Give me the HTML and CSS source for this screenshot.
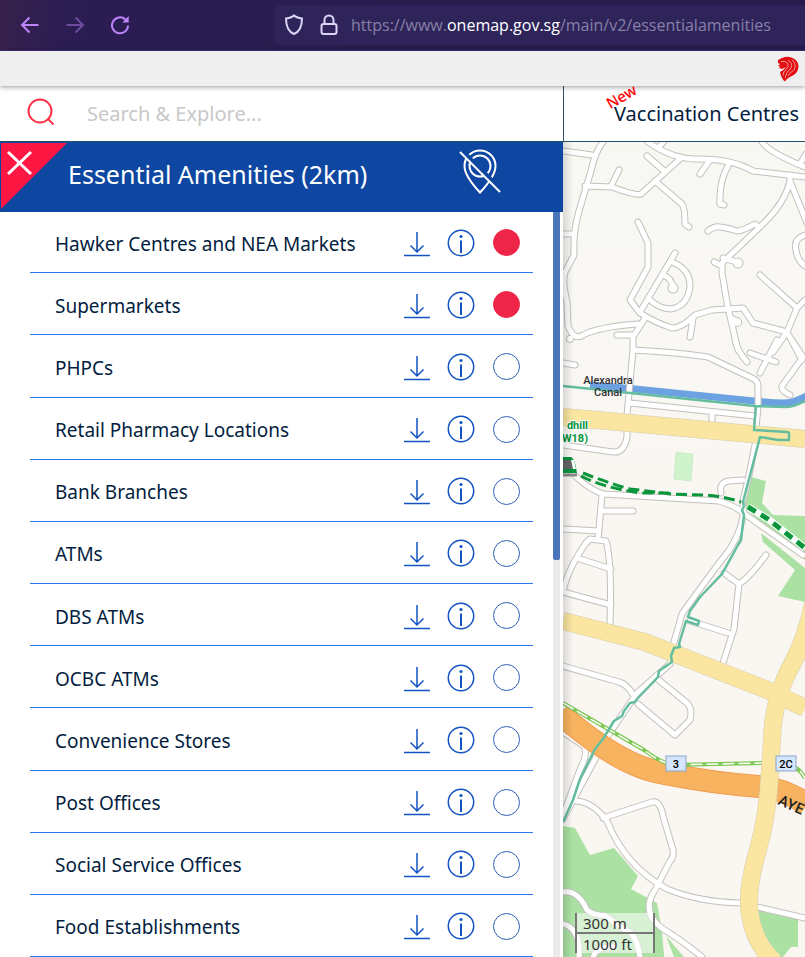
FILE: index.html
```html
<!DOCTYPE html>
<html lang="en">
<head>
<meta charset="utf-8">
<title>Essential Amenities</title>
<link rel="stylesheet" href="styles.css">
</head>
<body>
<svg class="defs" aria-hidden="true">
  <symbol id="download" viewBox="0 0 28 28"><path d="M14 3v20M7.500 16.500l6.500 6.500 6.500-6.500M1 26.500h26" fill="none" stroke="currentColor" stroke-width="1.500"/></symbol>
  <symbol id="info" viewBox="0 0 28 28"><circle cx="14" cy="14" r="12.700" fill="none" stroke="currentColor" stroke-width="1.500"/><path d="M14 11.500v12.500" stroke="currentColor" stroke-width="2"/><circle cx="14" cy="7.500" r="1.600" fill="currentColor"/></symbol>
</svg>

<div class="browser">
  <nav class="history" aria-label="History">
    <button type="button" aria-label="Back"><svg viewBox="0 0 20 20"><path d="M18.500 10H2M9.500 2.500L2 10l7.500 7.500"/></svg></button>
    <button type="button" aria-label="Forward" disabled><svg viewBox="0 0 20 20"><path d="M1.500 10H18M10.500 2.500L18 10l-7.500 7.500"/></svg></button>
    <button type="button" aria-label="Reload"><svg viewBox="0 0 20 20"><path d="M18 10.500a8 8 0 1 1-2.500-6"/><path d="M18.700 1v6.500h-6.500z" class="solid"/></svg></button>
  </nav>
  <div class="address">
    <svg class="shield" viewBox="0 0 20 22"><path d="M10 1.500C8 3.500 5 4 2 4.500c0 8 2 13 8 15.500 6-2.500 8-7.500 8-15.500-3-.5-6-1-8-3z"/></svg>
    <svg class="lock" viewBox="0 0 20 22"><rect x="2.500" y="10" width="15" height="10" rx="2"/><path d="M5.500 10V6a4.500 4.500 0 0 1 9 0v4"/></svg>
    <span class="url">https://www.<b>onemap.gov.sg</b>/main/v2/essentialamenities</span>
  </div>
</div>

<div class="masthead">
  <svg class="lion" viewBox="0 0 22 26" role="img" aria-label="Singapore Government"><path d="M1 4L5 2Q10 0 14 1.500q7 2 7.500 8.500 0 7-6.500 10-5 2-7 5.500-2-1-4-5.500l-1-4q3-1 6-5l-4 2-3-1 1-2H1l2-2-2-1z" fill="#e30d12"/><path d="M4 5.500h4l3 2q1 3-2 6-3 2-3 6M11 4q5 3 3 8-5 4-6 10M15 4q5 4 2 10-5 3-6 6" fill="none" stroke="#f4a6a4" stroke-width=".9"/></svg>
</div>

<div class="topbar">
  <form class="search">
    <svg viewBox="0 0 28 28"><circle cx="13" cy="13" r="11.500"/><path d="M20.500 20.500l6 6"/></svg>
    <input type="search" aria-label="Search" placeholder="Search &amp; Explore...">
  </form>
  <a class="vaccination" href="#"><span class="new">New</span>Vaccination Centres</a>
</div>

<main class="content">
  <section class="panel">
    <header class="panel-head">
      <button class="close" type="button" aria-label="Close"><svg viewBox="0 0 68 68"><path d="M1 1h66L1 67z" fill="#ff1744"/><path d="M8 10l23 22M31 10L8 32" stroke="#fff" stroke-width="3"/></svg></button>
      <h1>Essential Amenities (2km)</h1>
      <button class="pin" type="button" aria-label="Hide markers"><svg viewBox="0 0 42 46"><path d="M21 43.500Q5.500 27 5.500 17a15.500 15.500 0 0 1 31 0Q36.500 27 21 43.500z"/><circle cx="21" cy="17" r="10.500"/><path class="gap" d="M4 3l38 38"/><path d="M1 3l40 40"/></svg></button>
    </header>
    <div class="panel-body">
      <ul class="list"></ul>
      <div class="scroll"><div class="thumb"></div></div>
    </div>
  </section>
  <section class="map" aria-label="Map">
    <svg viewBox="563 142 242 815" preserveAspectRatio="xMinYMin slice">
      <defs>
        <linearGradient id="ground" x1="0" y1="0" x2="0" y2="1"><stop offset="0" stop-color="#f8f8f3"/><stop offset=".4" stop-color="#faf7f3"/></linearGradient>
        <g id="streets">
          <path d="M563 151l29 4M603 142q-8 10-12 29l-12 40q-6 20-5 44l-9 17q-3 10 2 30l1 24q6 15 15 9 15-8 55-11M563 234h9"/>
          <path d="M585 186l27 1q24 9 29 7l40-36M611 186l8-16M647 156l16 14M655 181l27 23q3 4 3 20l4 3M648 142q24 17 48 17 34-1 57 12l52 6M710 160l-10 14M660 146l4-5M728 166q-9 15-8 38l4 1"/>
          <path d="M762 142Q770 153 805 167M800 164l6-10M790 175v6Q785 203 762 225L722 263v10l6 35 10 42M790 181l17 42M708 231Q714 226 720 227q9 1 17 4 5 0 18-7l4 3M714 262l8 4M723 258l14 4M738 322l-7-4"/>
          <path d="M805 235Q793 239 796 250 797 260 805 266M760 275l37 33M805 300l-8 8-10 24-14 20M787 332l15 28"/>
          <path d="M638 222l10 21v24l-18 33 10 13q16 10 32 15 10 0 23-13l17-5 31-2 10 15 34 9M675 253l-35 59M672 262Q690 269 690 286 688 306 671 309 660 309 650 300M663 275q9 3 10 13M693 319l-3 18M645 318l-12 19v13M617 335h16"/>
          <path d="M633 350q42 2 75 7l46 22q4 2 4 8v20l-2 21M633 350l-6 65v22q-3 16-14 15l-50-7M630 403l125 13M712 413v9M735 340q3 12 12 22M777 340l-17 33M750 353l26 9M792 340l11 17-21 29q-1 5 8 9M563 363l12 2"/>
          <path d="M563 463q22 26 41 31l115 7q17 5 27 14l57 40M743 505q2 20-13 44-30 39-48 65l-10 35-2 15-33 29-30 44-44 82M758 430l-10 50-5 20M721 493q-2-11 8-12l14-1M602 495l-4 45M602 511h31M563 529l36 2M563 592q4-22 23-49l4-4 16 2q6 19 4 83M577 558l34 11M563 592l48 13M724 573l15 11q10-6 27-29M739 584l-5 45-12 37M690 621l38 12M563 666l56 16q8 2 15 14M655 677l32 26q6 6 3 17l-15 15-37-31M563 732l21 14q4 9-3 21l-18 48"/>
          <path d="M576 801q17 1 31 20 18 45 60 68 32 13 73 14l65 15M603 818l49-16q8-2 11 14l10 34q1 8-3 11l-15 29q-15 22 8 39 17 10 39 28M563 892q15-2 24 18 8 6 17 5l23 16q9 2 13 26M563 924q18 5 16 34M593 958q3-12 20-11"/>
        </g>
      </defs>
      <rect x="563" y="142" width="242" height="815" fill="url(#ground)"/>
      <g fill="#abe2a3">
        <path d="M563 826l12 2 15 27 24-7 24 28-7 13 26 14 5 29 3 35H563z"/>
        <path d="M751 477l15 4-4 22 11 12 32 1v44l-42-36-21-18zM761 533l44 35v34l-27-6 17-26-32-28zM759 908l39 10v29h-7l-8 10h-8l-16-18z"/>
        <path d="M666 936l18 21h-10z"/>
      </g>
      <path d="M676 452l17 2-2 27-17-2z" fill="#cff4cc" stroke="#b9dfb6" stroke-width=".5"/>
      <path d="M590 385l45 4 130 13q20 2 28 0l14-6" fill="none" stroke="#6da2e2" stroke-width="7"/>
      <use href="#streets" class="casing"/>
      <g class="ends casing-fill"><circle cx="738" cy="263" r="5.500"/><circle cx="673" cy="288" r="5.500"/><circle cx="737" cy="322" r="5"/><circle cx="570" cy="339" r="4"/></g>
      <use href="#streets" class="surface"/>
      <g fill="#fff"><circle cx="738" cy="263" r="4.500"/><circle cx="673" cy="288" r="4.500"/><circle cx="737" cy="322" r="4"/><circle cx="570" cy="339" r="3"/></g>
      <g fill="none">
        <path d="M560 714Q620 766 662 773q55 11 103 14 20 3 42 17" stroke="#f29c50" stroke-width="23"/>
        <path d="M560 714Q620 766 662 773q55 11 103 14 20 3 42 17" stroke="#f7b35f" stroke-width="21"/>
        <path d="M563 703l81 47q14 11 28 15l90-2h23q12 2 20 15" stroke="#7dc855" stroke-width="4"/>
        <path d="M563 703l81 47q14 11 28 15l90-2h23q12 2 20 15" stroke="#fff" stroke-width="1.500" stroke-dasharray="12 4"/>
        <path d="M563 417l100 9 142 13M563 621l82 21 120 47 40 19M814 600q-8 40-24 68-17 32-18 72l-2 30q-2 45-12 80-12 40-8 65 5 30 25 47" stroke="#d5ccb1" stroke-width="18"/>
        <path d="M563 417l100 9 142 13M563 621l82 21 120 47 40 19M814 600q-8 40-24 68-17 32-18 72l-2 30q-2 45-12 80-12 40-8 65 5 30 25 47" stroke="#fae6a1" stroke-width="17"/>
        <path d="M563 386l192 20 30 1q8 0 20-6M756 406l-2 24 33 2q2 0 2 2v6h-11l-18-3-17 65 1 4-2 4 2 5-3 25-3 5-16 29-22 23-10 14-2 6 11 4-1 4-12-4-7 23 1 3-6 1-3 8 1 6-13 9-1 6-21 22-2 3-5 1-6 8-2 5-8 5-11 18-8 10-15 30-7 21-10 22" stroke="#65bda0" stroke-width="2.500" stroke-linejoin="round"/>
        <path d="M583 473q22 9 47 16l42 5 31 1q20 1 38 7M581 476q20 11 59 17h32" stroke="#08953b" stroke-width="3" stroke-dasharray="11 5"/>
        <path d="M748 507l20 12 37 29" stroke="#fff" stroke-width="7"/>
        <path d="M748 507l20 12 37 29" stroke="#08953b" stroke-width="5" stroke-dasharray="9 6"/>
      </g>
      <path d="M563 457h8q4 1 6 16h-14z" fill="#08953b"/><path d="M563 460h8l2 9h-10z" fill="#666"/><path d="M571 460h3l2 9h-3z" fill="#fff"/><path d="M563 475h14" stroke="#888" stroke-width="3"/>
      <g class="place"><text x="608" y="384">Alexandra</text><text x="608" y="396">Canal</text></g>
      <g class="station"><text x="588" y="429">dhill</text><text x="588" y="442">W18)</text></g>
      <g class="route"><rect x="666" y="756" width="20" height="15"/><rect x="776" y="756" width="20" height="15"/><text x="676" y="768">3</text><text x="786" y="768">2C</text></g>
      <text class="expressway" transform="translate(777 804) rotate(24)">AYE</text>
    </svg>
    <div class="scale"><span>300 m</span><span>1000 ft</span></div>
  </section>
</main>
<script src="app.js"></script>
</body>
</html>
```
FILE: styles.css
```css
* { box-sizing: border-box; }
body { margin: 0; min-height: 100vh; display: flex; flex-direction: column; overflow-x: hidden; font-family: "Noto Sans", sans-serif; font-size: 19px; color: #031d40; background: #fff; }
button { border: 0; padding: 0; background: none; color: inherit; }
svg { display: block; }
.defs { position: absolute; width: 0; height: 0; }

.browser { display: flex; align-items: center; height: 51px; padding-left: 20px; background: linear-gradient(100deg, #38214b 0, #2b1d53 8%, #291c4d 50%); border-bottom: 1px solid #403080; }
.history { display: flex; gap: 25px; width: 254px; }
.history svg { width: 20px; height: 20px; fill: none; stroke: #bd85fb; stroke-width: 2; }
.history button:disabled { opacity: .45; }
.history .solid { fill: #bd85fb; stroke: none; }
.address { flex: 1; display: flex; align-items: center; height: 40px; padding-left: 10px; border-radius: 5px 0 0 5px; background: #2e245a; }
.address svg { width: 20px; height: 22px; fill: none; stroke: #dcd5f5; stroke-width: 2; }
.address .lock { margin-left: 15px; }
.url { margin-left: 12px; font-family: "Open Sans", sans-serif; font-size: 16px; color: #8780a8; white-space: nowrap; }
.url b { font-weight: 400; color: #fff; }

.masthead { display: flex; justify-content: flex-end; align-items: center; height: 35px; padding-right: 6px; background: #efefef; position: relative; z-index: 2; box-shadow: 0 1px 5px #0006; }
.lion { width: 22px; height: 26px; }

.topbar { display: grid; grid-template-columns: 564fr 241fr; height: 56px; border-bottom: 1px solid #24506b; }
.search { display: flex; align-items: center; padding-left: 27px; border-right: 1px solid #344a66; }
.search svg { width: 28px; height: 28px; margin-bottom: 4px; fill: none; stroke: #ff3347; stroke-width: 2; }
.search input { flex: 1; min-width: 0; margin-left: 32px; padding: 0; border: 0; outline: 0; font: inherit; font-size: 20px; background: none; }
.search input::placeholder { color: #c8c8c8; }
.vaccination { position: relative; z-index: 3; display: flex; align-items: center; justify-content: flex-end; padding-right: 6px; color: inherit; font-size: 20px; text-decoration: none; white-space: nowrap; }
.new { position: absolute; left: 41px; top: 0; font-size: 15px; font-weight: 500; color: #f00; transform: rotate(-30deg); }

.content { flex: 1; display: grid; grid-template-columns: 563fr 242fr; }
.panel { display: flex; flex-direction: column; }
.panel-head { position: relative; z-index: 1; display: flex; align-items: center; height: 70px; padding: 0 62px 6px 0; color: #fff; background: #0e47a1; }
.close { align-self: flex-start; width: 68px; }
.panel-head h1 { flex: 1; margin: 0; font-size: 25px; font-weight: 400; }
.pin { width: 42px; height: 46px; margin-bottom: 4px; }
.pin svg { fill: none; stroke: #fff; stroke-width: 2; }
.pin .gap { stroke: #0e47a1; stroke-width: 5; }
.panel-body { flex: 1; display: flex; margin-top: -1px; }
.list { flex: 1; display: grid; grid-auto-rows: minmax(62px, 1fr); margin: 0; padding: 0 20px 0 30px; list-style: none; }
.row { display: flex; align-items: center; padding: 2px 13px 0 25px; border-bottom: 1px solid #2779ed; }
.row span { flex: 1; padding-top: 2px; }
.row button { width: 28px; height: 28px; margin-right: 16px; color: #1353c2; }
.row button svg { width: 28px; height: 28px; }
.row input { appearance: none; width: 27px; height: 27px; margin: 0 0 0 2px; border: 1px solid #2b5fb4; border-radius: 50%; }
.row input:checked { background: #ef2449; border-color: #ef2449; }
.scroll { width: 10px; padding-right: 3px; background: linear-gradient(90deg, #ebebeb 7px, #fff 7px); }
.thumb { width: 7px; height: 349px; border-radius: 2px; background: #4b75ba; }

.map { position: relative; overflow: hidden; background: #f9f8f4; }
.map::after { content: ""; position: absolute; inset: 0 auto 0 0; width: 10px; background: linear-gradient(90deg, #0002, #0000); }
.map > svg { position: absolute; width: 100%; height: 100%; }
.map text { font-family: Roboto, sans-serif; }
.casing, .surface { fill: none; stroke-linecap: round; stroke-linejoin: round; }
.casing { stroke: #c2c0bc; stroke-width: 7; }
.surface { stroke: #fff; stroke-width: 5; }
.casing-fill { fill: #c2c0bc; }
.place { font-size: 11px; font-weight: 500; text-anchor: middle; fill: #333; }
.station { font-size: 11px; font-weight: 700; text-anchor: end; fill: #08953b; stroke: #fff; stroke-width: 2px; paint-order: stroke; }
.route rect { fill: #d5e6ff; stroke: #8ba5cc; }
.route { font-size: 11px; font-weight: 500; text-anchor: middle; }
.expressway { font-size: 15px; font-weight: 500; fill: #222; }
.scale { position: absolute; left: 12px; bottom: 4px; width: 80px; font-size: 15px; line-height: 20px; color: #333; }
.scale span { display: block; height: 21px; padding-left: 6px; border: 2px solid #777; border-top: 0; background: #fff8; }
.scale span + span { height: 19px; border-bottom: 0; }
```
FILE: app.js
```js
const amenities = [
  "Hawker Centres and NEA Markets", "Supermarkets", "PHPCs",
  "Retail Pharmacy Locations", "Bank Branches", "ATMs", "DBS ATMs",
  "OCBC ATMs", "Convenience Stores", "Post Offices",
  "Social Service Offices", "Food Establishments"
];
document.querySelector(".list").innerHTML = amenities.map((name, i) => `
  <li class="row"><span>${name}</span>
    <button type="button" aria-label="Download ${name}"><svg><use href="#download"/></svg></button>
    <button type="button" aria-label="About ${name}"><svg><use href="#info"/></svg></button>
    <input type="checkbox" aria-label="Show ${name}" ${i < 2 ? "checked" : ""}>
  </li>`).join("");
```
